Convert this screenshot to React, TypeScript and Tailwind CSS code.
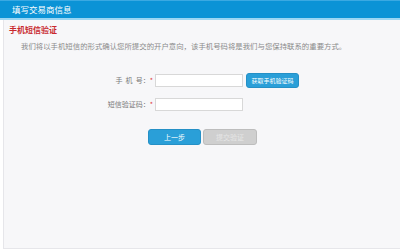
import React from "react";

const font = { fontFamily: '"Noto Sans CJK SC", "Noto Sans", sans-serif' };

function Row({ label, button }: { label: React.ReactNode; button?: boolean }) {
  return (
    <div className="flex items-center h-[15px]">
      <div className="w-[151px] pr-[2px] text-right text-[7px] text-[#7a7a7a] leading-none">
        {label}
        <span className="text-[#e0353a]">*</span>
      </div>
      <input
        className="w-[88px] h-[13px] bg-white border border-[#d8d8d8] outline-none"
        type="text"
      />
      {button && (
        <button className="ml-[3px] w-[53px] h-[15px] rounded-[3px] bg-[#2a9fd8] border border-[#2590c6] text-white text-[6px] leading-none">
          获取手机验证码
        </button>
      )}
    </div>
  );
}

export default function App() {
  return (
    <div className="w-[400px] h-[252px] bg-white overflow-hidden" style={font}>
      <div className="h-[20px] bg-[#0b93d6] border-t border-[#3aa9e2] border-b-2 border-b-[#9bd6f3] flex items-center pl-[12px]">
        <span className="text-white text-[8.5px] leading-none">填写交易商信息</span>
      </div>
      <div className="ml-[3px] h-[229px] bg-[#f7f7f9] border-l border-b border-[#e6e6ea]">
        <div className="pt-[6px] pl-[5px] text-[8px] font-bold text-[#c8282e] leading-none">
          手机短信验证
        </div>
        <div className="mt-[8px] pl-[17px] text-[7.4px] text-[#8a8a8a] leading-none whitespace-nowrap">
          我们将以手机短信的形式确认您所提交的开户意向，该手机号码将是我们与您保持联系的重要方式。
        </div>
        <div className="mt-[24px] flex flex-col gap-[9px]">
          <Row label={<>手&nbsp;&nbsp;机&nbsp;&nbsp;号：</>} button />
          <Row label="短信验证码：" />
        </div>
        <div className="mt-[17px] flex pl-[144px] gap-[2px]">
          <button className="w-[53px] h-[16px] rounded-[3px] bg-[#2a9fd8] border border-[#2590c6] text-white text-[7px] leading-none">
            上一步
          </button>
          <button className="w-[54px] h-[16px] rounded-[3px] bg-[#cfcfcf] border border-[#bdbdbd] text-[#e6e6e6] text-[7px] leading-none">
            提交验证
          </button>
        </div>
      </div>
    </div>
  );
}
